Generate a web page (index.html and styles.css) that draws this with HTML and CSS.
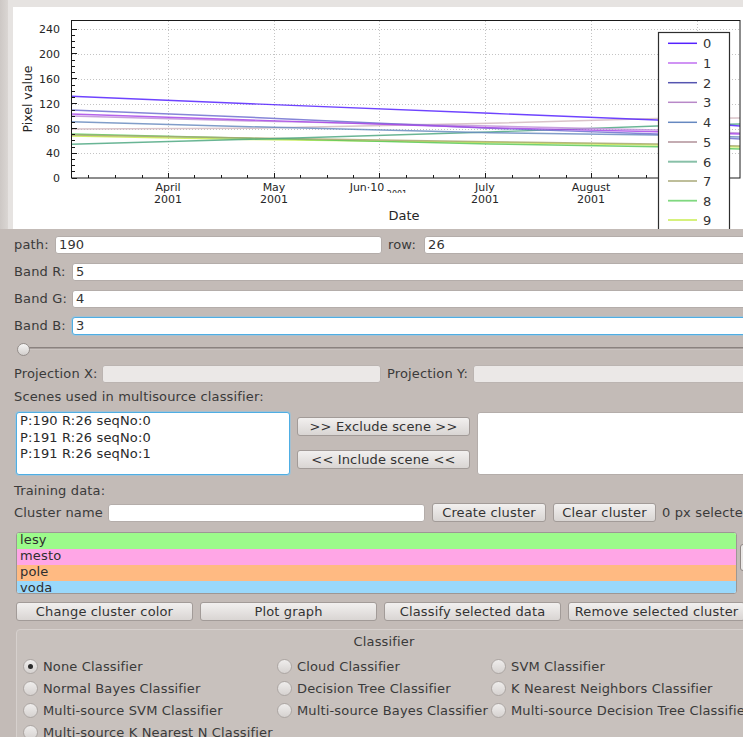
FILE: index.html
```html
<!DOCTYPE html>
<html lang="cs">
<head>
<meta charset="utf-8">
<title>Multisource classifier</title>
<link rel="stylesheet" href="styles.css">
</head>
<body>
<div class="app">
  <div class="chart-wrap">
    <div class="chart-panel">
      <svg class="chart" width="745" height="222" viewBox="13 7 745 222" xmlns="http://www.w3.org/2000/svg">
        <defs>
          <clipPath id="subclip"><rect x="384" y="185" width="30" height="8"/></clipPath>
        </defs>
        <!-- dotted grid -->
        <g fill="none" stroke="#c4c4c4" stroke-width="1" stroke-dasharray="1 2">
          <path d="M72 29.5H740M72 54.5H740M72 79.5H740M72 104.5H740M72 129.5H740M72 153.5H740"/>
          <path d="M168.5 21V178M274.5 21V178M379.5 21V178M485.5 21V178M591.5 21V178M697.5 21V178"/>
        </g>
        <!-- pixel value series -->
        <g fill="none" stroke-width="1.4" stroke-linejoin="round" stroke-opacity="0.85">
          <polyline stroke="#c8ec50" points="71,136 250,139.5 490,142.5 657,145 740,147"/>
          <polyline stroke="#5cc85c" points="71,134 250,138.3 490,144 657,146.7 740,149"/>
          <polyline stroke="#a8a870" points="71,135 250,138 490,141.7 657,144 740,146"/>
          <polyline stroke="#4fa882" points="71,144.3 250,139.3 490,132 657,126 740,124"/>
          <polyline stroke="#d2b8c0" points="71,129 250,128.3 490,123.3 657,118.5 740,118"/>
          <polyline stroke="#6a8cc0" points="71,121.7 250,126.7 490,132.7 657,135 740,137"/>
          <polyline stroke="#c090d8" points="71,116 250,121 490,126 657,130 740,133"/>
          <polyline stroke="#7070d0" points="71,110 250,117.3 490,128.3 657,134 740,139"/>
          <polyline stroke="#a848e8" points="71,114 250,120 490,127.7 657,131.7 740,134"/>
          <polyline stroke="#5522ff" points="71,96.3 250,103.7 490,113.3 657,120 740,126"/>
        </g>
        <rect x="71.5" y="20.5" width="668.5" height="157.5" fill="none" stroke="#1a1a1a"/>
        <!-- axis ticks -->
        <g stroke="#1a1a1a" stroke-width="1" fill="none">
          <path d="M72 178.5h5M72 153.5h5M72 128.5h5M72 103.5h5M72 78.5h5M72 53.5h5M72 29.5h5"/>
          <path d="M72 171.5h3M72 165.5h3M72 159.5h3M72 147.5h3M72 140.5h3M72 134.5h3M72 122.5h3M72 116.5h3M72 110.5h3M72 97.5h3M72 91.5h3M72 85.5h3M72 72.5h3M72 66.5h3M72 60.5h3M72 47.5h3M72 41.5h3M72 35.5h3"/>
          <path d="M168.5 178v-5M274.5 178v-5M379.5 178v-5M485.5 178v-5M591.5 178v-5M697.5 178v-5"/>
          <path d="M88.5 178v-3M115.5 178v-3M142.5 178v-3M194.5 178v-3M221.5 178v-3M247.5 178v-3M300.5 178v-3M327.5 178v-3M353.5 178v-3M406.5 178v-3M433.5 178v-3M459.5 178v-3M512.5 178v-3M539.5 178v-3M566.5 178v-3M618.5 178v-3M646.5 178v-3"/>
        </g>
        <!-- axis labels -->
        <g fill="#262626" font-size="11" text-anchor="end">
          <text x="60" y="33">240</text>
          <text x="60" y="58">200</text>
          <text x="60" y="83">160</text>
          <text x="60" y="108">120</text>
          <text x="60" y="133">80</text>
          <text x="60" y="157">40</text>
          <text x="60" y="182">0</text>
        </g>
        <g fill="#262626" font-size="11" text-anchor="middle">
          <text x="168" y="191">April</text><text x="168" y="203">2001</text>
          <text x="274" y="191">May</text><text x="274" y="203">2001</text>
          <text x="367" y="191">Jun·10</text>
          <text x="397" y="197" font-size="8" clip-path="url(#subclip)">2001</text>
          <text x="485" y="191">July</text><text x="485" y="203">2001</text>
          <text x="591" y="191">August</text><text x="591" y="203">2001</text>
        </g>
        <text x="404" y="220" font-size="13" fill="#262626" text-anchor="middle">Date</text>
        <text transform="translate(32 99) rotate(-90)" font-size="12.5" fill="#262626" text-anchor="middle">Pixel value</text>
        <!-- legend -->
        <rect x="658.5" y="32.5" width="71" height="230" fill="#fff" stroke="#2e2e2e" stroke-width="1.2"/>
        <g stroke-width="1.5" fill="none">
          <path stroke="#5522ff" d="M668 43.3H697"/>
          <path stroke="#c070f0" d="M668 63H697"/>
          <path stroke="#5555b0" d="M668 82.7H697"/>
          <path stroke="#b888c8" d="M668 102.3H697"/>
          <path stroke="#6688c0" d="M668 122.3H697"/>
          <path stroke="#b09098" d="M668 142H697"/>
          <path stroke="#88c0a8" d="M668 161.7H697" stroke-width="2"/>
          <path stroke="#a8a878" d="M668 181H697"/>
          <path stroke="#80d880" d="M668 200.7H697" stroke-width="1.8"/>
          <path stroke="#c8ec50" d="M668 220H697"/>
        </g>
        <g fill="#333" font-size="13">
          <text x="703" y="48">0</text>
          <text x="703" y="68">1</text>
          <text x="703" y="87.5">2</text>
          <text x="703" y="107">3</text>
          <text x="703" y="127">4</text>
          <text x="703" y="147">5</text>
          <text x="703" y="166.5">6</text>
          <text x="703" y="186">7</text>
          <text x="703" y="205.5">8</text>
          <text x="703" y="225">9</text>
        </g>
      </svg>
    </div>
  </div>

  <div class="form">
    <div class="row first">
      <span class="lbl w-path">path:</span>
      <div class="field path-field">190</div>
      <span class="lbl w-row">row:</span>
      <div class="field grow">26</div>
    </div>
    <div class="row">
      <span class="lbl w-band">Band R:</span>
      <div class="field grow">5</div>
    </div>
    <div class="row">
      <span class="lbl w-band">Band G:</span>
      <div class="field grow">4</div>
    </div>
    <div class="row">
      <span class="lbl w-band">Band B:</span>
      <div class="field grow focus">3</div>
    </div>

    <div class="slider"><span class="knob"></span></div>

    <div class="row proj">
      <span class="lbl w-projx">Projection X:</span>
      <div class="field disabled proj-x"></div>
      <span class="lbl w-projy">Projection Y:</span>
      <div class="field disabled grow"></div>
    </div>

    <div class="caption">Scenes used in multisource classifier:</div>
    <div class="scenes">
      <div class="list focus scene-list">
        <div class="item">P:190 R:26 seqNo:0</div>
        <div class="item">P:191 R:26 seqNo:0</div>
        <div class="item">P:191 R:26 seqNo:1</div>
      </div>
      <div class="scene-buttons">
        <button class="btn">&gt;&gt; Exclude scene &gt;&gt;</button>
        <button class="btn">&lt;&lt; Include scene &lt;&lt;</button>
      </div>
      <div class="list excluded"></div>
    </div>

    <div class="caption training">Training data:</div>
    <div class="row cluster-row">
      <span class="lbl w-cluster">Cluster name</span>
      <div class="field name-field"></div>
      <button class="btn btn-create">Create cluster</button>
      <button class="btn btn-clear">Clear cluster</button>
      <span class="lbl">0 px selected</span>
    </div>

    <div class="clusters">
      <div class="list cluster-list">
        <div class="cl lesy">lesy</div>
        <div class="cl mesto">mesto</div>
        <div class="cl pole">pole</div>
        <div class="cl voda">voda</div>
      </div>
      <div class="vscroll"><span class="thumb"></span></div>
    </div>

    <div class="actions">
      <button class="btn">Change cluster color</button>
      <button class="btn">Plot graph</button>
      <button class="btn">Classify selected data</button>
      <button class="btn">Remove selected cluster</button>
    </div>

    <div class="group">
      <div class="group-title">Classifier</div>
      <div class="radio-grid">
        <label class="radio"><span class="dot on"></span>None Classifier</label>
        <label class="radio"><span class="dot"></span>Cloud Classifier</label>
        <label class="radio"><span class="dot"></span>SVM Classifier</label>
        <label class="radio"><span class="dot"></span>Normal Bayes Classifier</label>
        <label class="radio"><span class="dot"></span>Decision Tree Classifier</label>
        <label class="radio"><span class="dot"></span>K Nearest Neighbors Classifier</label>
        <label class="radio"><span class="dot"></span>Multi-source SVM Classifier</label>
        <label class="radio"><span class="dot"></span>Multi-source Bayes Classifier</label>
        <label class="radio"><span class="dot"></span>Multi-source Decision Tree Classifier</label>
        <label class="radio"><span class="dot"></span>Multi-source K Nearest N Classifier</label>
      </div>
    </div>
  </div>
</div>
</body>
</html>
```

FILE: styles.css
```css
* {
  box-sizing: border-box;
}

html,
body {
  margin: 0;
  padding: 0;
}

body {
  background: #c3bbb7;
  overflow: hidden;
  font-family: "DejaVu Sans", sans-serif;
  font-size: 13px;
  color: #363636;
}

.app {
  width: 758px;
}

/* chart area */
.chart-wrap {
  height: 229px;
  padding: 7px 0 0 13px;
  background: linear-gradient(to right, #cdc8c5 0, #dad6d3 8px, #e6e3e1 8px);
}

.chart-panel {
  height: 222px;
  background: #fff;
  overflow: hidden;
}

.chart {
  display: block;
  font-family: "DejaVu Sans", sans-serif;
}

/* form */
.form {
  padding: 0 6px 0 14px;
  letter-spacing: 0.15px;
}

.row {
  display: flex;
  align-items: center;
  gap: 5px;
  height: 18px;
  margin-top: 9px;
  line-height: 16px;
}

.row.first {
  margin-top: 7px;
}

.lbl {
  flex: none;
  white-space: nowrap;
  color: #3a3a3a;
}

.w-path { width: 36px; }
.w-row { width: 31px; margin-left: 1px; }
.w-band { width: 53px; }
.w-projx { width: 83px; }
.w-projy { width: 81px; margin-left: 1px; }
.w-cluster { width: 88px; }

.field {
  height: 18px;
  background: #fff;
  border: 1px solid #b4adaa;
  border-radius: 3px;
  padding: 0 3px;
  line-height: 16px;
  color: #333;
  white-space: nowrap;
}

.grow {
  flex: 1;
}

.path-field {
  width: 327px;
}

.field.focus {
  border-color: #4eaee4;
  box-shadow: 0 0 0 1px rgba(130, 200, 240, 0.45);
}

.field.disabled {
  background: #ebe8e7;
  border-color: #bbb4b1;
}

.proj-x {
  width: 279px;
}

.slider {
  height: 14px;
  margin: 7px 0 0 3px;
  display: flex;
  align-items: center;
  background: linear-gradient(#8a827f 0 1px, #a8a09d 1px 2px, #cbc4c1 2px 3px) no-repeat 3px 5px / 100% 3px;
}

.knob {
  width: 13px;
  height: 13px;
  border-radius: 50%;
  border: 1px solid #958e8b;
  background: linear-gradient(#f7f6f5, #d2cecc);
}

.caption {
  line-height: 16px;
  margin-top: 6px;
  color: #3a3a3a;
}

.caption.training {
  margin-top: 8px;
}

/* scene lists */
.scenes {
  display: flex;
  gap: 7px;
  height: 63px;
  margin-top: 7px;
  padding-left: 2px;
}

.list {
  background: #fff;
  border: 1px solid #b4adaa;
  border-radius: 3px;
  overflow: hidden;
}

.list.focus {
  border-color: #4eaee4;
  box-shadow: 0 0 0 1px rgba(130, 200, 240, 0.45);
}

.scene-list {
  width: 274px;
  padding: 0 3px;
  line-height: 16.5px;
  color: #2a2a2a;
}

.scene-buttons {
  display: flex;
  flex-direction: column;
  gap: 14px;
  width: 173px;
  padding-top: 5px;
}

.excluded {
  flex: 1;
}

.btn {
  font: inherit;
  letter-spacing: inherit;
  color: #333;
  height: 19px;
  padding: 0;
  border: 1px solid #a29b98;
  border-radius: 3px;
  background: linear-gradient(#f2f0ef, #d9d5d3);
  line-height: 17px;
  white-space: nowrap;
  overflow: hidden;
}

/* training data */
.cluster-row {
  height: 19px;
  margin-top: 4px;
  gap: 7px;
}

.w-cluster {
  margin-right: -1px;
}

.name-field {
  width: 317px;
}

.btn-create {
  width: 114px;
}

.btn-clear {
  width: 103px;
  margin-right: -1px;
}

.clusters {
  display: flex;
  gap: 3px;
  height: 62px;
  margin-top: 10px;
  padding-left: 2px;
}

.cluster-list {
  flex: 1;
  border-color: #9d9794;
}

.cl {
  height: 16px;
  line-height: 14px;
  padding-left: 3px;
  color: #2e2e2e;
}

.lesy { background: #9cfb8b; }
.mesto { background: #ffa6e6; }
.pole { background: #ffba82; }
.voda { background: #99d8fb; }

.vscroll {
  width: 12px;
  padding-top: 12px;
}

.thumb {
  display: block;
  height: 27px;
  border: 1px solid #8f8885;
  border-radius: 3px;
  background: linear-gradient(to right, #eceae9, #d5d1cf);
}

.actions {
  display: flex;
  gap: 7px;
  margin-top: 8px;
  padding-left: 2px;
}

.actions .btn {
  width: 177px;
  flex: none;
}

/* classifier group */
.group {
  height: 120px;
  margin: 8px 0 0 2px;
  border: 1px solid #d6d0cd;
  border-radius: 4px;
  background: #c8c1bd;
}

.group-title {
  text-align: center;
  line-height: 16px;
  padding-top: 4px;
  color: #3a3a3a;
}

.radio-grid {
  display: grid;
  grid-template-columns: 254px 214px auto;
  grid-auto-rows: 22px;
  padding-left: 6px;
  margin-top: 5px;
}

.radio {
  display: flex;
  align-items: center;
  gap: 5px;
  white-space: nowrap;
  color: #3a3a3a;
}

.dot {
  flex: none;
  width: 15px;
  height: 15px;
  border-radius: 50%;
  border: 1px solid #aca6a3;
  background: linear-gradient(#efedec, #d6d2d0);
  display: flex;
  align-items: center;
  justify-content: center;
}

.dot.on::after {
  content: "";
  width: 5px;
  height: 5px;
  border-radius: 50%;
  background: #2b2b2b;
}
```
